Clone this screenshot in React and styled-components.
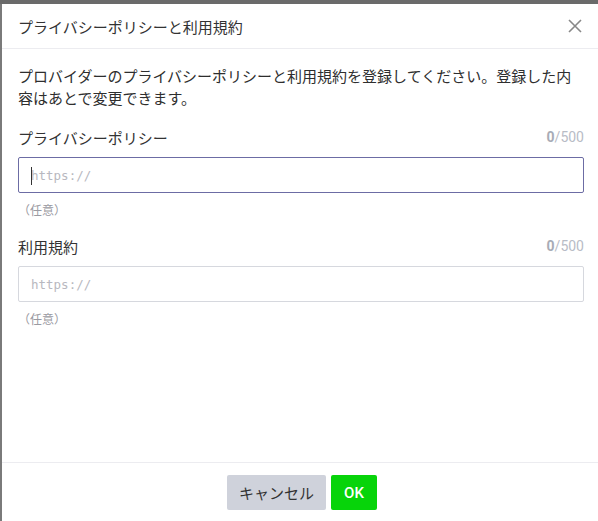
import React from 'react';
import styled, { createGlobalStyle } from 'styled-components';

const GlobalStyle = createGlobalStyle`
    html, body {
        margin: 0;
        padding: 0;
        background: #7a7a7a;
        overflow: hidden;
    }
    body {
        font-family: "Noto Sans CJK JP", "Noto Sans", sans-serif;
        color: #333;
    }
`;

const fields = [
    { id: 'privacy', label: 'プライバシーポリシー', focused: true },
    { id: 'terms', label: '利用規約', focused: false },
];

export default function App() {
    return (
        <>
            <GlobalStyle />
            <Overlay>
                <Modal>
                    <Header>
                        <Title>プライバシーポリシーと利用規約</Title>
                        <CloseBtn aria-label="close">
                            <svg width="14" height="14" viewBox="0 0 14 14">
                                <path d="M1 1L13 13M13 1L1 13" stroke="#888" strokeWidth="1.6" />
                            </svg>
                        </CloseBtn>
                    </Header>
                    <Body>
                        <Description>
                            プロバイダーのプライバシーポリシーと利用規約を登録してください。登録した内容はあとで変更できます。
                        </Description>
                        {fields.map((f) => (
                            <Field key={f.id}>
                                <LabelRow>
                                    <Label>{f.label}</Label>
                                    <Counter>
                                        <b>0</b>/500
                                    </Counter>
                                </LabelRow>
                                <InputBox $focused={f.focused}>
                                    {f.focused && <Caret />}
                                    <Placeholder>https://</Placeholder>
                                </InputBox>
                                <Hint>（任意）</Hint>
                            </Field>
                        ))}
                    </Body>
                    <Footer>
                        <CancelBtn>キャンセル</CancelBtn>
                        <OkBtn>OK</OkBtn>
                    </Footer>
                </Modal>
            </Overlay>
        </>
    );
}

const Overlay = styled.div`
    height: 521px;
    padding: 4px 0 0 2px;
    box-sizing: border-box;
    border-top: 4px solid #6a6a6a;
    padding-top: 0;
`;

const Modal = styled.div`
    width: 600px;
    height: 518px;
    background: #fff;
    display: flex;
    flex-direction: column;
`;

const Header = styled.div`
    height: 44px;
    display: flex;
    align-items: center;
    justify-content: space-between;
    padding: 0 16px;
    border-bottom: 1px solid #ececf0;
`;

const Title = styled.h1`
    margin: 0;
    font-size: 15px;
    font-weight: 400;
    color: #333;
`;

const CloseBtn = styled.div`
    display: flex;
    align-items: center;
    margin-right: 4px;
`;

const Body = styled.div`
    flex: 1;
    padding: 16px 16px 0;
`;

const Description = styled.p`
    margin: 0 0 17px;
    font-size: 15px;
    line-height: 22px;
    width: 564px;
    color: #2e2e2e;
`;

const Field = styled.div`
    margin-bottom: 16px;
`;

const LabelRow = styled.div`
    display: flex;
    justify-content: space-between;
    align-items: center;
    width: 566px;
    height: 22px;
    margin-bottom: 9px;
`;

const Label = styled.span`
    font-size: 15px;
    color: #333;
`;

const Counter = styled.span`
    font-family: Roboto, "Liberation Sans", sans-serif;
    font-size: 14px;
    color: #b8bcc6;

    b {
        color: #a8acb6;
        font-weight: 700;
    }
`;

const InputBox = styled.div`
    width: 566px;
    height: 36px;
    box-sizing: border-box;
    border: 1px solid ${(p) => (p.$focused ? '#6c6ca4' : '#d6d8de')};
    border-radius: 2px;
    display: flex;
    align-items: center;
    padding-left: 12px;
    position: relative;
`;

const Caret = styled.span`
    position: absolute;
    left: 12px;
    top: 9px;
    width: 1px;
    height: 18px;
    background: #333;
`;

const Placeholder = styled.span`
    font-family: "DejaVu Sans Mono", "Liberation Mono", monospace;
    font-size: 12.5px;
    color: #b8b8c0;
`;

const Hint = styled.div`
    margin-top: 8px;
    font-size: 12px;
    line-height: 18px;
    color: #9a9aa2;
`;

const Footer = styled.div`
    border-top: 1px solid #ececf0;
    padding: 12px 0;
    display: flex;
    justify-content: center;
    gap: 5px;
`;

const CancelBtn = styled.button`
    height: 35px;
    padding: 0 12px;
    border: 0;
    border-radius: 2px;
    background: #cfd2db;
    font-family: "Noto Sans CJK JP", sans-serif;
    font-size: 15px;
    color: #333;
`;

const OkBtn = styled.button`
    height: 35px;
    padding: 0 13px;
    border: 0;
    border-radius: 2px;
    background: #07d40a;
    font-family: Roboto, "Liberation Sans", sans-serif;
    font-size: 15px;
    font-weight: 500;
    color: #fff;
`;
